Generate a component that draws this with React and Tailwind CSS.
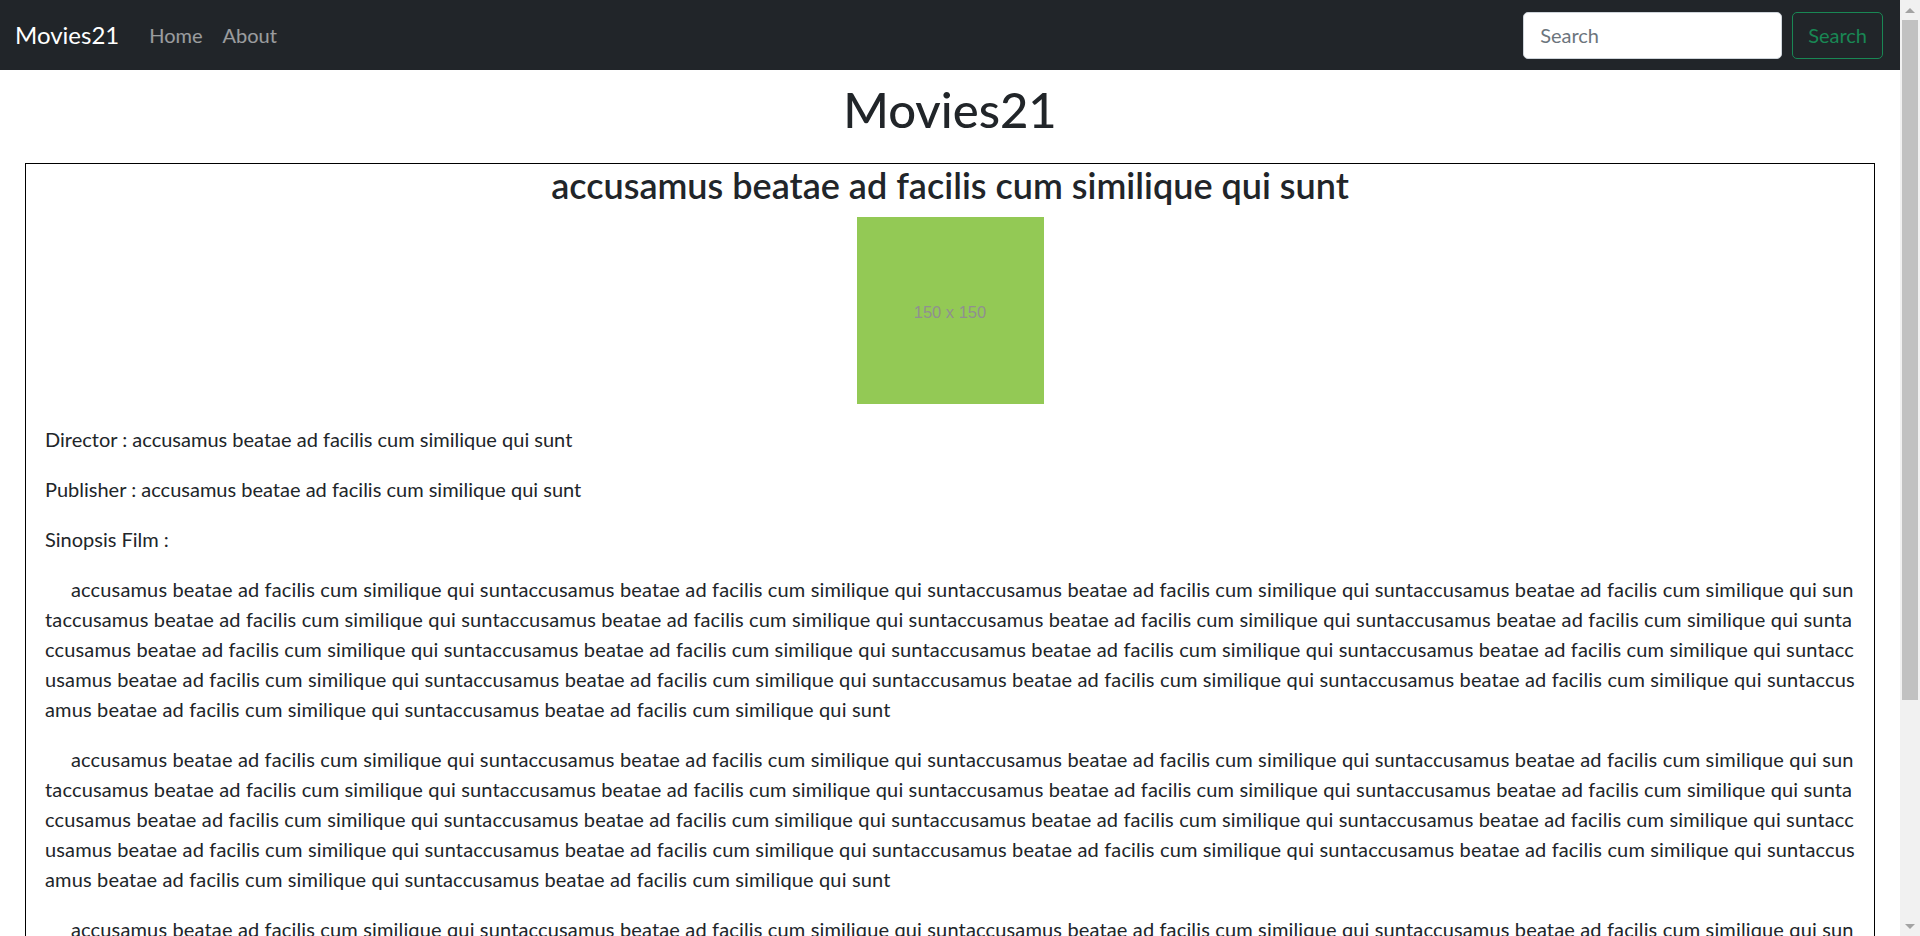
import React from 'react';

const unit = 'accusamus beatae ad facilis cum similique qui sunt';
const sinopsis = unit.repeat(18);

const Navbar = () => {
  return (
    <nav className="h-[70px] bg-[#212529] flex items-center justify-between pl-[15px] pr-[17px]">
      <div className="flex items-center">
        <a href="#" className="text-[24px] text-white mr-[20px] leading-[38px]">Movies21</a>
        <a href="#" className="text-[20px] text-white/55 px-[10px] leading-[30px]">Home</a>
        <a href="#" className="text-[20px] text-white/55 px-[10px] leading-[30px]">About</a>
      </div>
      <form className="flex items-center" onSubmit={(e) => e.preventDefault()}>
        <input
          type="search"
          placeholder="Search"
          className="w-[259px] h-[47px] bg-white border border-[#ced4da] rounded-[5px] px-[16px] text-[20px] text-[#212529] placeholder:text-[#6c757d] mr-[10px] outline-none"
        />
        <button
          type="submit"
          className="h-[47px] px-[15px] border border-[#198754] rounded-[5px] text-[20px] text-[#198754]"
        >
          Search
        </button>
      </form>
    </nav>
  );
};

const Scrollbar = () => {
  return (
    <div className="w-[20px] h-screen bg-[#f1f1f1] flex flex-col items-center shrink-0">
      <div className="h-[20px] w-full flex items-center justify-center">
        <div className="w-0 h-0 border-l-[5px] border-r-[5px] border-b-[5px] border-l-transparent border-r-transparent border-b-[#a3a3a3]"></div>
      </div>
      <div className="w-[16px] h-[680px] bg-[#c1c1c1]"></div>
      <div className="flex-1"></div>
      <div className="h-[20px] w-full flex items-center justify-center">
        <div className="w-0 h-0 border-l-[5px] border-r-[5px] border-t-[5px] border-l-transparent border-r-transparent border-t-[#a3a3a3]"></div>
      </div>
    </div>
  );
};

export default function App() {
  return (
    <div className="flex h-screen overflow-hidden bg-white font-[Lato,'Liberation_Sans',sans-serif] text-[#212529]">
      <div className="flex-1 overflow-hidden">
        <Navbar />

        <h1 className="text-center text-[49px] font-medium leading-[62px] mt-[8px] mb-[23px]">Movies21</h1>

        {/* Movie detail */}
        <div className="mx-[25px] border border-black px-[19px]">
          <h3 className="text-center text-[36px] font-semibold leading-[42px]">
            accusamus beatae ad facilis cum similique qui sunt
          </h3>
          <div className="flex justify-center mt-[11px] mb-[20px]">
            <div className="w-[187px] h-[187px] bg-[#93c955] flex items-center justify-center">
              <span className="font-['Liberation_Sans'] text-[16.5px] text-[#909090] mt-[3px]">150 x 150</span>
            </div>
          </div>

          <p className="text-[20px] leading-[30px] mb-[20px]">Director : {unit}</p>
          <p className="text-[20px] leading-[30px] mb-[20px]">Publisher : {unit}</p>
          <p className="text-[20px] leading-[30px] mb-[20px]">Sinopsis Film :</p>

          {[1, 2, 3, 4].map((i) => (
            <p key={i} className="text-[20px] leading-[30px] mb-[20px] indent-[26px] break-all tracking-[0.15px]">
              {sinopsis}
            </p>
          ))}
        </div>
      </div>
      <Scrollbar />
    </div>
  );
}
